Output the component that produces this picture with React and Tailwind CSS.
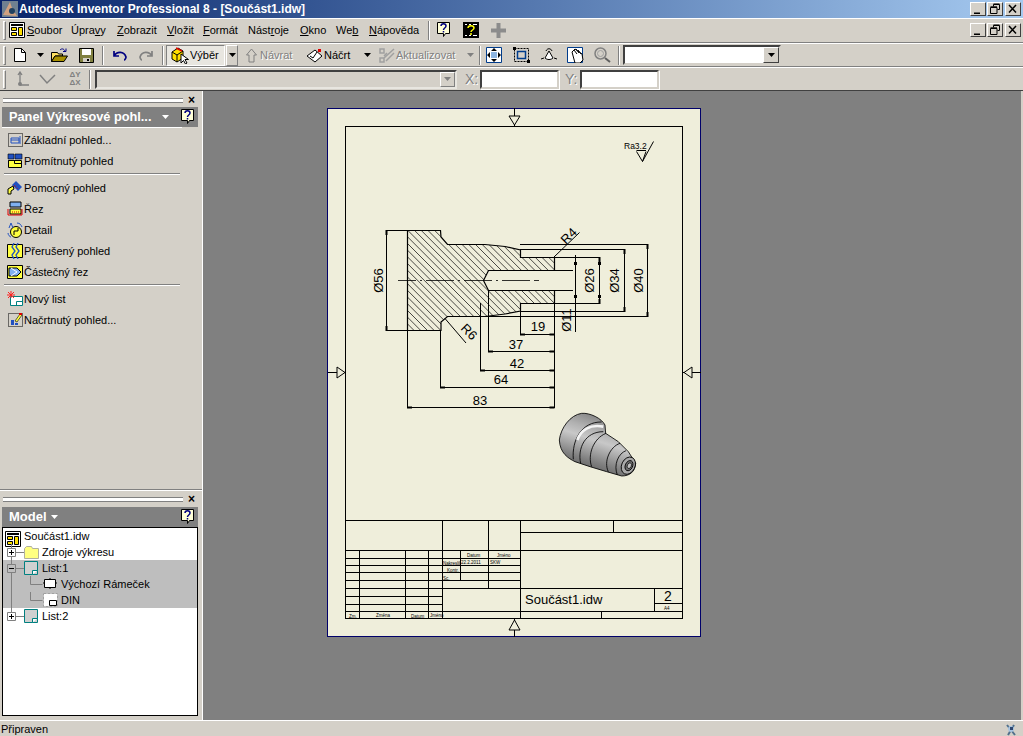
import React from 'react';

// Kreslicí pomůcka pro drobné ikony 16x16
function Ico({ w = 16, h = 16, className = '', children }) {
  return (
    <svg width={w} height={h} viewBox={`0 0 ${w} ${h}`} className={`shrink-0 ${className}`} fill="none">
      {children}
    </svg>
  );
}

const Grip = () => (
  <div className="w-[3px] h-[19px] ml-[3px] mr-[1px] shrink-0 border-t border-l border-white border-r border-b border-r-[#808080] border-b-[#808080]" />
);

const Sep = ({ className = '' }) => (
  <div className={`w-[2px] h-[19px] shrink-0 border-l border-[#808080] border-r border-r-white ${className}`} />
);

const Arrow = ({ className = '', color = '#000' }) => (
  <Ico w={7} h={4} className={className}>
    <path d="M0 0h7L3.5 4z" fill={color} />
  </Ico>
);

function WinBtn({ kind, className = '' }) {
  return (
    <div className={`w-[16px] h-[14px] bg-[#d4d0c8] border border-t-white border-l-white border-b-[#404040] border-r-[#404040] ${className}`}>
      <svg width="14" height="12" viewBox="0 0 14 12" fill="none">
        {kind === 'min' && <path d="M3 9.5h6v1.5H3z" fill="#000" />}
        {kind === 'max' && <path d="M5.5 1.5h6v5h-2M5.5 1.5v2M2.5 4.5h6.5v6H2.5zM2.5 3.8h6.5M5.5 1h6" stroke="#000" />}
        {kind === 'close' && <path d="M3 2l7 7.5M10 2L3 9.5" stroke="#000" strokeWidth="1.5" />}
      </svg>
    </div>
  );
}

const HelpIcon = ({ className = '' }) => (
  <Ico w={14} h={16} className={className}>
    <path d="M.5.5h12v11h-4l-2 3v-3h-6z" fill="#ffffd8" stroke="#000" />
    <path d="M4 4c0-3 5-3 5 0 0 2-2.500 2-2.500 4M6.500 9v1.500" stroke="#000080" strokeWidth="1.500" />
  </Ico>
);

const disabledText = 'text-[#808080] [text-shadow:1px_1px_0_#fff]';

const menu = [
  { pre: '', u: 'S', post: 'oubor', w: 'w-[44px]' },
  { pre: 'Úpra', u: 'v', post: 'y', w: 'w-[46px]' },
  { pre: '', u: 'Z', post: 'obrazit', w: 'w-[50px]' },
  { pre: '', u: 'V', post: 'ložit', w: 'w-[36px]' },
  { pre: '', u: 'F', post: 'ormát', w: 'w-[45px]' },
  { pre: 'Nást', u: 'r', post: 'oje', w: 'w-[52px]' },
  { pre: '', u: 'O', post: 'kno', w: 'w-[36px]' },
  { pre: 'We', u: 'b', post: '', w: 'w-[33px]' },
  { pre: '', u: 'N', post: 'ápověda', w: 'w-[59px]' },
];

function MenuBar() {
  return (
    <div className="h-[24px] flex items-center border-b border-[#808080] pb-[1px]">
      <Grip />
      <Ico w={16} h={16} className="ml-[2px] mr-[2px]">
        <path d="M.5.5h15v15H.5z" fill="#fff" stroke="#000" />
        <path d="M2 2h12v2H2z" fill="#000" />
        <path d="M2.500 5.500h5v3h-5zM9.500 5.500h4v8h-4zM2.500 10.500h5v3h-5z" fill="#ffe000" stroke="#000" />
      </Ico>
      {menu.map((m) => (
        <span key={m.pre + m.u} className={`${m.w} shrink-0 whitespace-nowrap`}>
          {m.pre}<u>{m.u}</u>{m.post}
        </span>
      ))}
      <Sep />
      <HelpIcon className="ml-[7px]" />
      <Ico w={16} h={16} className="ml-[12px]">
        <path d="M0 0h16v16H0z" fill="#000" />
        <path d="M2 2h2v1H2zM6 2h2v1H6zM10 2h4v1h-4zM2 13h2v1H2zM6 13h2v1H6zM10 13h4v1h-4z" fill="#fff" />
        <path d="M5 6c0-3 6-3 6 0 0 2-3 2-3 4M8 11v2" stroke="#ffff00" strokeWidth="1.500" />
      </Ico>
      <Ico w={15} h={15} className="ml-[12px]">
        <path d="M5.500 0h4v5.500H15v4H9.500V15h-4V9.500H0v-4h5.500z" fill="#8c8c8c" />
      </Ico>
      <div className="ml-auto flex mr-[2px]">
        <WinBtn kind="min" />
        <WinBtn kind="max" className="ml-[1px]" />
        <WinBtn kind="close" className="ml-[2px]" />
      </div>
    </div>
  );
}

function ToolBar() {
  return (
    <div className="h-[24px] flex items-center border-t border-white border-b border-b-[#808080]">
      <Grip />
      <Ico w={12} h={14} className="ml-[7px]">
        <path d="M.5.500h7l4 4v9H.5z" fill="#fff" stroke="#000" />
        <path d="M7.500.500v4h4" stroke="#000" />
      </Ico>
      <Arrow className="ml-[11px]" />
      <Ico w={17} h={14} className="ml-[7px]">
        <path d="M.5 4.500h6l1 1.500h4v2H4L.5 13.500z" fill="#ffe060" stroke="#000" />
        <path d="M.5 13.500L4 8h12.500l-3.500 5.500z" fill="#a89000" stroke="#000" />
        <path d="M9 2c2-2 4-1 5 1M15 0.500v3h-3" stroke="#000080" />
      </Ico>
      <Ico w={15} h={15} className="ml-[11px]">
        <path d="M.5.500h14v14H.5z" fill="#808040" stroke="#000" />
        <path d="M3 1h9v6H3z" fill="#fff" />
        <path d="M4 10h7v4H4z" fill="#d4d0c8" />
        <path d="M8 11h2v2H8z" fill="#000" />
      </Ico>
      <Sep className="ml-[8px]" />
      <Ico w={15} h={11} className="ml-[8px]">
        <path d="M2 1v5h5M2 6c3-5 10-5 12 1 0 1-1 3-2 3" stroke="#000080" strokeWidth="1.700" />
      </Ico>
      <Ico w={15} h={11} className="ml-[12px]">
        <path d="M13 1v5H8M13 6C10 1 3 1 1 7c0 1 1 3 2 3" stroke="#808080" strokeWidth="1.700" />
      </Ico>
      <Sep className="ml-[8px]" />
      <div className="ml-[2px] w-[59px] h-[21px] flex items-center bg-[#e8e6e0] border border-t-[#808080] border-l-[#808080] border-r-white border-b-white">
        <Ico w={18} h={17} className="ml-[4px]">
          <path d="M1 5l6-4 5 3v7l-6 4-5-3z" fill="#ffe000" stroke="#000" />
          <path d="M1 5l5 3 6-4M6 8v7" stroke="#000" />
          <path d="M5 1l6 3" stroke="#e00000" strokeWidth="1.500" />
          <path d="M10 7v9l2.500-2.500 2 3.500 1.500-1-2-3.500h3.500z" fill="#fff" stroke="#000" />
        </Ico>
        <span className="ml-[1px]">Výběr</span>
      </div>
      <div className="ml-[1px] w-[12px] h-[21px] flex items-center justify-center border border-t-white border-l-white border-r-[#808080] border-b-[#808080]">
        <Arrow />
      </div>
      <Ico w={13} h={15} className="ml-[7px]">
        <path d="M6.500 1l5 6H9v7H4V7H1.500z" fill="#d4d0c8" stroke="#808080" />
      </Ico>
      <span className={`ml-[2px] w-[46px] shrink-0 ${disabledText}`}>Návrat</span>
      <Ico w={17} h={15}>
        <path d="M1 8l8-6 7 6-7 6z" fill="#fff" stroke="#000" />
        <path d="M4 8l3 2 4-6" stroke="#000" />
        <path d="M12 1h3v3h-3z" fill="#e00000" />
      </Ico>
      <span className="ml-[1px] w-[40px] shrink-0">Náčrt</span>
      <Arrow />
      <Ico w={16} h={15} className="ml-[8px]">
        <path d="M1 1h4v4H1zM1 10h4v4H1zM5 10L15 1M7 13L15 5M8 5l-3 3" stroke="#a0a0a0" strokeWidth="1.500" />
      </Ico>
      <span className={`ml-[1px] w-[71px] shrink-0 ${disabledText}`}>Aktualizovat</span>
      <Arrow color="#808080" />
      <Sep className="ml-[5px]" />
      <Ico w={16} h={16} className="ml-[5px]">
        <path d="M.5.500h15v15H.5z" fill="#fff" stroke="#003c8c" />
        <path d="M8 1l3 3H5zM8 15l3-3H5zM1 8l3-3v6zM15 8l-3-3v6z" fill="#000" />
        <path d="M5 5h6v6H5z" fill="#8cb4e0" />
      </Ico>
      <Ico w={17} h={16} className="ml-[11px]">
        <path d="M1.500 1.500h14v13h-14z" stroke="#000" strokeDasharray="2 1" />
        <path d="M4.500 4.500h8v7h-8z" stroke="#003c8c" strokeWidth="1.500" />
        <path d="M0 0h3v3H0zM14 13h3v3h-3z" fill="#000" />
      </Ico>
      <Ico w={16} h={16} className="ml-[11px]">
        <path d="M8 4L4 11c2 2 6 2 8 0z" fill="#fff" stroke="#000" />
        <path d="M5 4c1-3 5-3 6 0M0 12l3-1M16 12l-3-1" stroke="#000" />
      </Ico>
      <Ico w={17} h={16} className="ml-[10px]">
        <path d="M.5.500h15v15H.5z" fill="#fff" stroke="#003c8c" />
        <path d="M5 5l3-3 7 5 1 6-3 3H8z" fill="#fff" stroke="#000" />
        <path d="M7 3l3 4M9 2l3 4M11 3l3 4" stroke="#000" />
      </Ico>
      <Ico w={17} h={16} className="ml-[10px]">
        <circle cx="6.500" cy="6.500" r="5.500" stroke="#808080" strokeWidth="1.500" />
        <circle cx="6.500" cy="6.500" r="3" stroke="#a0a0a0" />
        <path d="M11 11l5 4" stroke="#606060" strokeWidth="2" />
      </Ico>
      <Sep className="ml-[7px]" />
      <div className="ml-[3px] w-[158px] h-[20px] flex justify-end bg-white border-2 border-t-[#404040] border-l-[#404040] border-r-[#d4d0c8] border-b-[#d4d0c8]">
        <div className="w-[16px] h-[16px] flex items-center justify-center bg-[#d4d0c8] border border-t-white border-l-white border-r-[#404040] border-b-[#404040]">
          <Arrow />
        </div>
      </div>
    </div>
  );
}

function CoordBar() {
  return (
    <div className="h-[24px] flex items-center border-t border-white border-b border-b-[#404040]">
      <Grip />
      <Ico w={16} h={16} className="ml-[7px]">
        <path d="M6 14V2M6 14h9M4 4l2-3 2 3" stroke="#808080" strokeWidth="1.300" />
        <circle cx="6" cy="13" r="2" fill="#808080" />
      </Ico>
      <Ico w={17} h={12} className="ml-[9px]">
        <path d="M1 2l7 8 8-8" stroke="#808080" strokeWidth="1.500" />
      </Ico>
      <div className="ml-[12px] w-[14px] h-[16px] text-[8px] leading-[8px] text-[#808080] font-bold text-center">ΔY<br />ΔX</div>
      <Sep className="ml-[7px]" />
      <div className="ml-[4px] w-[362px] h-[19px] flex justify-end border-2 border-t-[#404040] border-l-[#404040] border-r-[#e8e6e0] border-b-[#e8e6e0]">
        <div className="w-[15px] h-[15px] flex items-center justify-center bg-[#d4d0c8] border border-t-white border-l-white border-r-[#808080] border-b-[#808080]">
          <Arrow color="#808080" />
        </div>
      </div>
      <span className={`ml-[8px] w-[15px] text-[14px] ${disabledText}`}>X:</span>
      <div className="w-[79px] h-[19px] bg-white border-2 border-t-[#404040] border-l-[#404040] border-r-[#d4d0c8] border-b-[#d4d0c8] shadow-[1px_1px_0_#fff]" />
      <span className={`ml-[6px] w-[15px] text-[14px] ${disabledText}`}>Y:</span>
      <div className="w-[79px] h-[19px] bg-white border-2 border-t-[#404040] border-l-[#404040] border-r-[#d4d0c8] border-b-[#d4d0c8] shadow-[1px_1px_0_#fff]" />
    </div>
  );
}

const PanelHead = () => (
  <div className="flex items-center h-[9px]">
    <div className="ml-[3px] w-[180px] h-[5px] border-t border-b border-t-[#808080] border-b-[#808080] bg-white" />
    <span className="ml-[5px] text-[12px] leading-[9px] font-bold">×</span>
  </div>
);

const YELLOW = '#ffff40';
const BLUE = '#2050c0';

const viewIcons = {
  base: <><path d="M1.500 1.500h14v13h-14z" stroke="#000" strokeDasharray="1 1" /><path d="M4 6h8v5H4z" stroke={BLUE} /><path d="M4 8h8M13 4v8" stroke={BLUE} /></>,
  proj: <><path d="M1 1h6v5H1zM8 1h7v5H8z" fill={BLUE} stroke="#000" strokeWidth=".6" /><path d="M1.500 7.500h13v7h-13z" fill={YELLOW} stroke="#000" /><path d="M1.500 7.500h6v3h7" stroke="#000" /></>,
  aux: <><path d="M9 1l6 6-4 4-6-6z" fill={BLUE} /><path d="M7 5l4 4" stroke="#e00000" strokeDasharray="1 1" /><path d="M1 9l5-3 1 3-3 2v3H1z" fill={YELLOW} stroke="#000" /></>,
  cut: <><path d="M3 1h11v5H3z" fill="#80b0f0" stroke="#000" /><path d="M3 8h11v5H3z" fill={YELLOW} stroke="#000" /><path d="M1 14V8M15 14V8M1 14h14" stroke="#e00000" /><path d="M5 11h7" stroke="#e00000" strokeDasharray="1 1" /></>,
  detail: <><circle cx="9" cy="10" r="5.500" fill={YELLOW} stroke="#000" /><path d="M2 6l2-5 2 5M10 1c3 0 4 2 5 4M1 11c0 2 2 4 3 4" stroke={BLUE} /><path d="M7 13V9h4V6" stroke="#000" /></>,
  brk: <><path d="M.5 1.500h15v13H.5z" fill={YELLOW} stroke="#000" /><path d="M7 0l-2 4 3 4-3 4 2 4M11 0L9 4l3 4-3 4 2 4" stroke={BLUE} strokeWidth="1.300" /></>,
  part: <><path d="M.5 1.500h15v13H.5z" fill={YELLOW} stroke="#000" /><path d="M2 4h8l4 4-4 4H2z" fill="#80b0f0" stroke="#000" /><path d="M4 4l6 4-6 4" stroke="#fff" /></>,
  sheet: <><path d="M3.500 5.500h12v9h-12z" fill="#fff" stroke="#008080" /><path d="M9.500 14.500v-4h6" stroke="#008080" /><path d="M4 0v7M0 4h8M1 1l6 6M7 1L1 7" stroke="#ff2020" /></>,
  sketch: <><path d="M1.500 1.500h14v13h-14z" stroke="#000" strokeDasharray="1 1" /><path d="M4 8h3v5H4z" fill={BLUE} /><path d="M8 11h3v2H8z" fill={BLUE} /><path d="M8 9l5-7 2 1-5 7z" fill={YELLOW} stroke="#000" strokeWidth=".6" /><path d="M12 1h3v2h-3z" fill="#e00000" /></>,
};

const viewGroups = [
  [['base', 'Základní pohled...'], ['proj', 'Promítnutý pohled']],
  [['aux', 'Pomocný pohled'], ['cut', 'Řez'], ['detail', 'Detail'], ['brk', 'Přerušený pohled'], ['part', 'Částečný řez']],
  [['sheet', 'Nový list'], ['sketch', 'Načrtnutý pohled...']],
];

function ViewPanel() {
  return (
    <div className="h-[399px] pt-[5px] border-b border-[#808080] relative">
      <PanelHead />
      <div className="mt-[2px] ml-[2px] w-[196px] h-[20px] bg-[#808080] flex items-center relative">
        <span className="ml-[7px] w-[153px] shrink-0 text-white font-bold text-[12.750px] whitespace-nowrap">Panel Výkresové pohl...</span>
        <Arrow color="#fff" />
        <HelpIcon className="absolute left-[179px] top-[2px]" />
      </div>
      <div className="ml-[2px] w-[180px] h-[1px] bg-white" />
      <div className="mt-[1px]">
        {viewGroups.map((group, i) => (
          <div key={i}>
            {i > 0 && <div className="ml-[4px] w-[176px] h-[2px] mt-[2px] mb-[2px] border-t border-[#808080] border-b border-b-white" />}
            {group.map(([ic, label]) => (
              <div key={label} className="h-[21px] flex items-center">
                <Ico className="ml-[7px]">{viewIcons[ic]}</Ico>
                <span className="ml-[1px] whitespace-nowrap">{label}</span>
              </div>
            ))}
          </div>
        ))}
      </div>
    </div>
  );
}

const treeIcon = {
  doc: <><path d="M2.500 2.500h15v15h-15z" fill="#fff" stroke="#000" /><path d="M4 4h12v2H4z" fill="#000" /><path d="M4.500 7.500h5v3h-5zM11.500 7.500h4v8h-4zM4.500 12.500h5v3h-5z" fill="#ffe000" stroke="#000" /></>,
  folder: <><path d="M.5 4.500l2-2h5l1 2h6v10H.5z" fill="#ffff80" stroke="#b0b0a0" /></>,
  sheet: <><path d="M.5 1.500h13v13H.5z" fill="#d0d0d0" stroke="#008080" /><path d="M8.500 14.500v-4h5" fill="#fff" stroke="#008080" /></>,
  frame: <><path d="M1.500 3.500h11v8h-11z" fill="#fff" stroke="#000" /><path d="M0 7h2M12 7h2M7 2v2M7 11v2" stroke="#000" /></>,
  din: <><path d="M.5 1.500h14v13H.5z" fill="#fff" stroke="#a0a0a0" strokeDasharray="3 1" /><path d="M6.500 8.500h7v5h-7z" fill="#fff" stroke="#000" /></>,
};

function TreeRow({ depth, icon, label, sign, line, selected }) {
  const width = [21, 39, 58][depth];
  const ix = [0, 21, 40][depth];
  return (
    <div className={`h-[16px] flex items-center ${selected ? 'bg-[#bebebe]' : ''}`}>
      <svg width={width} height="16" viewBox={`0 0 ${width} 16`} className="shrink-0 overflow-visible" fill="none">
        {line && <path d={line} stroke="#808080" />}
        {sign && <path d="M4.500 4.500h8v8h-8z" fill={sign === '-' ? '#bebebe' : '#fff'} stroke="#808080" />}
        {sign && <path d="M6 8.500h5" stroke="#000" />}
        {sign === '+' && <path d="M8.500 6v5" stroke="#000" />}
        <g transform={`translate(${ix} ${depth === 0 ? 1 : 0})`}>{treeIcon[icon]}</g>
      </svg>
      <span className="whitespace-nowrap leading-[14px] -mt-[1px]">{label}</span>
    </div>
  );
}

function ModelPanel() {
  return (
    <div className="flex-1 border-t border-white pt-[4px] flex flex-col">
      <PanelHead />
      <div className="mt-[3px] ml-[2px] w-[196px] h-[20px] bg-[#808080] flex items-center relative shrink-0">
        <span className="ml-[7px] text-white font-bold text-[13px]">Model</span>
        <Arrow color="#fff" className="ml-[4px]" />
        <HelpIcon className="absolute left-[179px] top-[2px]" />
      </div>
      <div className="ml-[2px] w-[196px] h-[189px] bg-white border border-black">
        <TreeRow depth={0} icon="doc" label="Součást1.idw" />
        <TreeRow depth={1} icon="folder" label="Zdroje výkresu" sign="+" line="M8.500 0v16M12 8.500h9" />
        <TreeRow depth={1} icon="sheet" label="List:1" sign="-" selected line="M8.500 0v16M12 8.500h9" />
        <TreeRow depth={2} icon="frame" label="Výchozí Rámeček" selected line="M8.500 0v16M27.500 0v8.500h12" />
        <TreeRow depth={2} icon="din" label="DIN" selected line="M8.500 0v16M27.500 0v8.500h12" />
        <TreeRow depth={1} icon="sheet" label="List:2" sign="+" line="M8.500 0v8M12 8.500h9" />
      </div>
    </div>
  );
}

function Dim({ x1, y1, x2, y2 }) {
  // kótovací čára s malými plnými šipkami na koncích
  const h = y1 === y2;
  const a = h ? `M${x1} ${y1 - 1}h5v2h-5z` : `M${x1 - 1} ${y1}h2v5h-2z`;
  const b = h ? `M${x2 - 5} ${y2 - 1}h5v2h-5z` : `M${x2 - 1} ${y2 - 5}h2v5h-2z`;
  return (
    <g>
      <path d={`M${x1} ${y1}L${x2} ${y2}`} stroke="#000" />
      <path d={a + b} fill="#000" />
    </g>
  );
}

const profile = 'M407.500 230.500H440.500L441 237L447.500 244.500H485L505 246.500L520.500 250V257.500H554.500V270.500H488.500L483.500 280.500L488.500 290.500H554.500V303.500H520.500V311L505 314L485 316.500H447.500L441 322V330.500H407.500Z';

const tiny = { fontSize: 4.500, fill: '#000' };
const PAPER = '#efeedb';

function Sheet() {
  const hatch = [];
  for (let i = 0; i < 50; i++) {
    const x = 250 + i * 6.700;
    hatch.push(<path key={i} d={`M${x} 220L${x + 130} 350`} stroke="#000" strokeWidth=".7" />);
  }
  const lbl = { fontSize: 13, fill: '#000', textAnchor: 'middle' };
  return (
    <svg width="374" height="529" viewBox="327 108 374 529" className="block shrink-0" fontFamily='"Liberation Sans", sans-serif'>
      <defs>
        <clipPath id="part"><path d={profile} /></clipPath>
        <linearGradient id="metal" x1="0.700" y1="0" x2="0.300" y2="1">
          <stop offset="0" stopColor="#707070" />
          <stop offset=".3" stopColor="#b0b0b0" />
          <stop offset=".45" stopColor="#c8c8c8" />
          <stop offset=".75" stopColor="#808080" />
          <stop offset="1" stopColor="#505050" />
        </linearGradient>
      </defs>
      <rect x="327.500" y="108.500" width="373" height="528" fill={PAPER} stroke="#00006a" />
      <rect x="345.500" y="126.500" width="337" height="492" fill="none" stroke="#000" />

      {/* Středové značky na rámu */}
      <path d="M514.500 108v18M328 372.500h17M683 372.500h18M514.500 619v18" stroke="#000" />
      <path d="M509 116h11l-5.500 9zM337 367v11l8-5.500zM692 367v11l-8-5.500zM509 630h11l-5.500-10z" fill={PAPER} stroke="#000" />

      {/* Drsnost */}
      <text x="624" y="149" fontSize="8.500" fill="#000">Ra3.2</text>
      <path d="M636.500 150.500h9.500M636.500 151.500l6 10 11-20M646 151.500l-3.500 10" fill="none" stroke="#000" />

      {/* Šrafovaný řez */}
      <g clipPath="url(#part)">{hatch}</g>
      <path d={profile} fill="none" stroke="#000" strokeWidth="1.200" />
      <path d="M398 280.500h18m4 0h2m4 0h28m4 0h2m4 0h28m4 0h2m4 0h28m4 0h5" stroke="#000" strokeWidth=".8" />

      {/* Vynášecí čáry */}
      <path d="M386.500 230.500H440M386.500 330.500H440M520 244.500H647.500M447 316.500H647.500M520 249.500H624.500M520 311.500H624.500M520 257.500H599.500M520 303.500H599.500M554 270.500H573M554 290.500H573M407.500 331V408M440.500 331V388M480.500 303V371M488.500 290V352M520.500 303V335M554.500 303V408" stroke="#000" fill="none" />

      <Dim x1={386.500} y1={230} x2={386.500} y2={331} />
      <Dim x1={599.500} y1={257} x2={599.500} y2={304} />
      <Dim x1={624.500} y1={249} x2={624.500} y2={312} />
      <Dim x1={647.500} y1={244} x2={647.500} y2={317} />
      <path d="M575.500 255V332" stroke="#000" />
      <path d="M574 262h3v3h-3zM574 295h3v3h-3zM598 262h3v3h-3zM598 295h3v3h-3z" fill="#000" />
      <Dim x1={520} y1={334.500} x2={554.500} y2={334.500} />
      <Dim x1={488} y1={351.500} x2={554.500} y2={351.500} />
      <Dim x1={480} y1={370.500} x2={554.500} y2={370.500} />
      <Dim x1={440} y1={387.500} x2={554.500} y2={387.500} />
      <Dim x1={407} y1={407.500} x2={554.500} y2={407.500} />
      <path d="M445 318.500L466 343M554 257L579.500 232.500" stroke="#000" />

      <text {...lbl} x="538" y="331">19</text>
      <text {...lbl} x="516" y="349">37</text>
      <text {...lbl} x="517" y="368">42</text>
      <text {...lbl} x="501" y="384">64</text>
      <text {...lbl} x="480" y="405">83</text>
      <text {...lbl} transform="translate(382.500 280.500) rotate(-90)">Ø56</text>
      <text {...lbl} transform="translate(594 280.500) rotate(-90)">Ø26</text>
      <text {...lbl} transform="translate(619 280.500) rotate(-90)">Ø34</text>
      <text {...lbl} transform="translate(643 280.500) rotate(-90)">Ø40</text>
      <text {...lbl} transform="translate(571 320) rotate(-90)">Ø11</text>
      <text {...lbl} transform="translate(572 239) rotate(-45)">R4</text>
      <text {...lbl} transform="translate(466 335) rotate(45)">R6</text>

      {/* Náhled součásti */}
      <g transform="translate(540 400) scale(.3333)">
        <path d="M58 120C62 85 90 45 125 40C150 38 185 55 195 75L197 100L235 125L265 155L287 190C285 215 270 228 245 228L200 215L150 200L105 185C85 175 60 160 58 120Z" fill="url(#metal)" stroke="#000" strokeWidth="2.500" />
        <path d="M100 178C95 120 125 65 185 66" fill="none" stroke="#000" strokeWidth="2.500" />
        <path d="M112 120C122 90 150 72 190 80" fill="none" stroke="#f4f4f4" strokeWidth="8" />
        <path d="M122 190C112 145 135 95 190 95" fill="none" stroke="#000" strokeWidth="2.500" />
        <path d="M155 200C142 165 160 115 198 100" fill="none" stroke="#000" strokeWidth="2.500" />
        <path d="M205 215C190 185 210 140 240 130" fill="none" stroke="#000" strokeWidth="2.500" />
        <path d="M232 225C220 195 235 160 258 152" fill="none" stroke="#000" strokeWidth="2.500" />
        <ellipse cx="265" cy="197" rx="20" ry="27" transform="rotate(25 265 197)" fill="#a8a8a8" stroke="#000" strokeWidth="2.500" />
        <ellipse cx="267" cy="197" rx="11" ry="16" transform="rotate(25 267 197)" fill="#707070" stroke="#000" strokeWidth="2.500" />
        <ellipse cx="268" cy="197" rx="6" ry="9" transform="rotate(25 268 197)" fill="#c0c0c0" stroke="#000" strokeWidth="2" />
      </g>

      {/* Popisové pole */}
      <path d="M346 520.500H683M521 532.500H683M346 550.500H683M346 558.500H520M346 565.500H520M346 572.500H520M346 580.500H520M346 588.500H683M346 596.500H442M346 604.500H442M346 611.500H683M654 603.500H683M442.500 520.500V619M488.500 520.500V588M520.500 520.500V619M613.500 520.500V532M359.500 550V619M405.500 550V619M428.500 550V619M460.500 550V581M601.500 611V619M654.500 588V611" stroke="#000" fill="none" />
      <text {...tiny} x="467" y="557">Datum</text>
      <text {...tiny} x="497" y="557">Jméno</text>
      <text {...tiny} x="443" y="565">Nakreslil</text>
      <text {...tiny} x="461" y="564">22.2.2011</text>
      <text {...tiny} x="490" y="564">SKW</text>
      <text {...tiny} x="447" y="572">Kontr.</text>
      <text {...tiny} x="443" y="580">Sc.</text>
      <text {...tiny} x="349" y="618">Zm.</text>
      <text {...tiny} x="376" y="617">Změna</text>
      <text {...tiny} x="411" y="618">Datum</text>
      <text {...tiny} x="430" y="617">Jméno</text>
      <text x="525" y="604" fontSize="13" fill="#000">Součást1.idw</text>
      <text x="668" y="601" fontSize="14" fill="#000" textAnchor="middle">2</text>
      <text {...tiny} x="664" y="610">A4</text>
    </svg>
  );
}

export default function App() {
  return (
    <div className="w-[1023px] h-[736px] overflow-hidden flex flex-col bg-[#d4d0c8] text-black text-[11px] leading-[14px] font-['Liberation_Sans','Noto_Sans',sans-serif]">
      <div className="h-[18px] flex items-center bg-gradient-to-r from-[#0a246a] to-[#a6caf0] shrink-0">
        <Ico w={16} h={16} className="ml-[2px]">
          <path d="M0 0h16v16H0z" fill="#708090" />
          <path d="M1 14L8 1l2 6 5 8z" fill="#d0a080" />
          <circle cx="10" cy="10" r="3" fill="#204060" />
        </Ico>
        <span className="ml-[1px] text-white font-bold text-[12px] whitespace-nowrap">Autodesk Inventor Professional 8 - [Součást1.idw]</span>
        <div className="ml-auto flex mr-[2px]">
          <WinBtn kind="min" />
          <WinBtn kind="max" className="ml-[1px]" />
          <WinBtn kind="close" className="ml-[2px]" />
        </div>
      </div>
      <div className="h-[1px] bg-white shrink-0" />
      <MenuBar />
      <ToolBar />
      <CoordBar />
      <div className="flex-1 flex min-h-0">
        <aside className="w-[203px] shrink-0 flex flex-col border-r border-white">
          <ViewPanel />
          <ModelPanel />
        </aside>
        <main className="flex-1 bg-[#808080] pl-[124px] pt-[17px]">
          <Sheet />
        </main>
        <div className="w-[2px] shrink-0" />
      </div>
      <div className="h-[16px] shrink-0 flex items-center border-t border-white">
        <span className="ml-[1px]">Připraven</span>
        <Ico w={12} h={12} className="ml-auto mr-[6px] mt-[3px]">
          <path d="M2 1l8 10M9 1L3 11" stroke="#50708c" strokeWidth="2" />
          <circle cx="6" cy="5" r="3" fill="#a8c4e0" />
          <path d="M5 3h3v3H5z" fill="#304870" />
        </Ico>
      </div>
    </div>
  );
}
